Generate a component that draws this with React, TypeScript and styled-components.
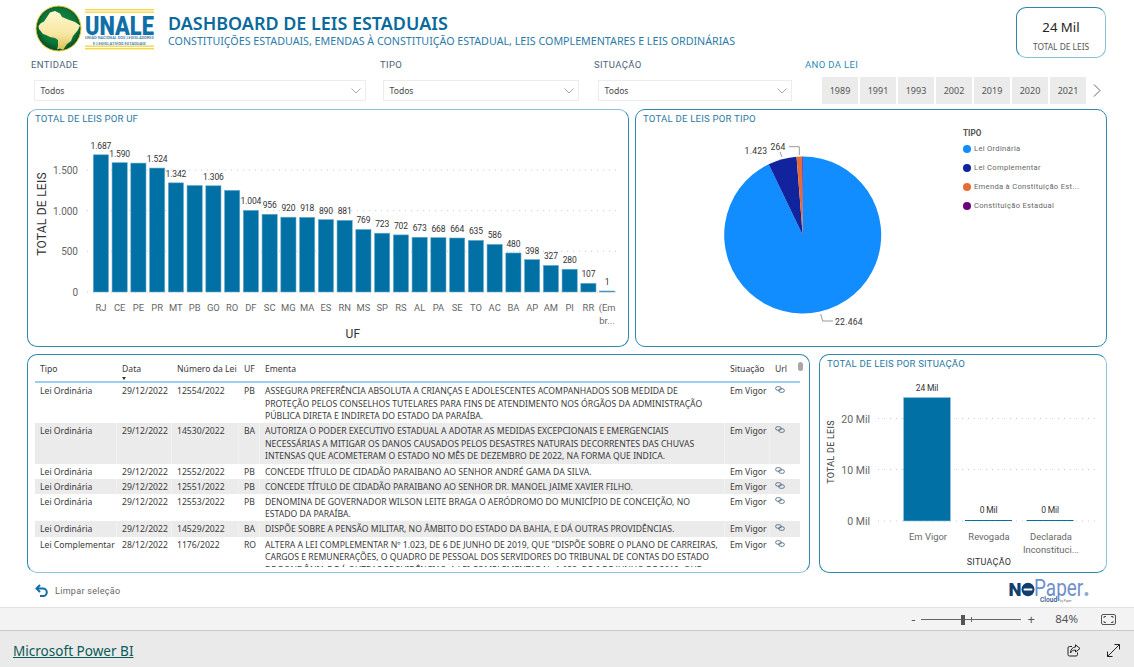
import React from "react";
import styled, { createGlobalStyle } from "styled-components";

const Global = createGlobalStyle`
  html, body { margin: 0; padding: 0; background: #fff; overflow: hidden; }
  #root { width: 1134px; height: 667px; }
  * { box-sizing: border-box; }
`;

const din = `Roboto, "Liberation Sans", sans-serif`;
const segoe = `"Noto Sans", "Open Sans", sans-serif`;

const Page = styled.div`
  width: 1134px; height: 667px; display: flex; flex-direction: column; overflow: hidden; background: #fff;
  font-family: ${segoe};
`;
const Report = styled.main`
  height: 607px; display: flex; flex-direction: column; flex: none;
`;
const Header = styled.header`
  height: 54px; margin-top: 4px; padding: 0 28px 0 35px; display: flex; align-items: flex-start; flex: none;
`;
const TitleBlock = styled.div`
  margin-left: 12px; padding-top: 8px; display: flex; flex-direction: column;
`;
const Title = styled.h1`
  margin: 0; font: 600 17.95px/20px ${segoe}; color: #0a6a9c; white-space: nowrap; padding-top: 1px;
`;
const Subtitle = styled.div`
  font: 400 10.69px/15px ${segoe}; color: #2b7ca8; white-space: nowrap; margin-top: 1px;
`;
const Kpi = styled.div`
  margin-left: auto; margin-top: 3px; width: 90px; height: 51px; border: 1px solid #2f86ad; border-bottom-color: #86bfd8; border-right-color: #86bfd8;
  border-radius: 10px; display: flex; flex-direction: column; align-items: center; padding-top: 11px;
`;
const KpiValue = styled.div` font: 400 13.2px/17px ${segoe}; color: #252423; `;
const KpiLabel = styled.div` font: 400 8.4px/12px ${segoe}; color: #555; margin-top: 5px; white-space: nowrap; `;

const Filters = styled.section`
  height: 51px; flex: none; padding-left: 31px; display: grid; grid-template-columns: 349px 214px 211px 1fr;
`;
const FilterCol = styled.div` display: flex; flex-direction: column; `;
const FilterLabel = styled.div<{ $accent?: boolean }>`
  font: 400 9.5px/12px ${din}; letter-spacing: 0.35px; color: ${p => (p.$accent ? "#2f8ab5" : "#4a6478")};
  margin-top: 1px; height: 16px;
`;
const Select = styled.div<{ $w: number }>`
  width: ${p => p.$w}px; height: 21px; margin-left: ${p => (p.$w > 195 ? 3 : 4)}px; margin-top: 5px; border: 1px solid #ececec;
  display: flex; align-items: center; justify-content: space-between; padding: 0 0 0 5.5px;
  font: 400 8.6px/12px ${segoe}; color: #4a4a4a;
`;
const Chevron = styled.svg` width: 10px; height: 6px; margin-right: 4px; flex: none; `;
const Tiles = styled.div`
  display: flex; gap: 2px; align-items: center; margin-left: 17px; margin-top: 2px;
`;
const Tile = styled.div`
  width: 36px; height: 27px; background: #ebebeb; display: flex; align-items: center; justify-content: center;
  font: 400 9px/12px ${segoe}; color: #555;
`;
const TileNext = styled.svg` width: 8px; height: 13px; margin-left: 5px; `;

const ChartsRow = styled.section`
  height: 238px; flex: none; margin-left: 27px; display: grid; grid-template-columns: 602px 472px; gap: 6px;
`;
const BottomRow = styled.section`
  height: 219px; flex: none; margin: 7px 0 0 27px; display: grid; grid-template-columns: 783px 288px; gap: 9px;
`;
const softColor = "#8cc3dc";
const Card = styled.article<{ $soft?: "top" | "bottom" | "right" }>`
  position: relative; border: 1px solid #2f88b0; border-radius: 10px; overflow: hidden; background: #fff;
  ${p => (p.$soft ? `border-${p.$soft}-color: ${softColor};` : "")}
`;
const CardTitle = styled.h2`
  margin: 0; height: 18px; padding: 3px 0 0 7px; font: 400 9.6px/12px ${din}; letter-spacing: 0.2px; color: #2a7aa3; white-space: nowrap;
`;
const ChartSvg = styled.svg` display: block; `;
const Tick = styled.text<{ $s?: number }>`
  font: 400 ${p => p.$s ?? 10}px ${din}; fill: #666;
`;
const DataLabel = styled.text<{ $s?: number }>`
  font: 400 ${p => p.$s ?? 8.5}px ${din}; fill: #333; letter-spacing: ${p => (p.$s ? 0.25 : -0.15)}px;
`;
const AxisTitle = styled.text<{ $s?: number }>`
  font: 400 ${p => p.$s ?? 12}px ${din}; fill: #333; letter-spacing: 0.25px;
`;
const PieBody = styled.div` display: flex; `;
const Legend = styled.div` padding-left: 7px; display: flex; flex-direction: column; `;
const LegendTitle = styled.div` font: 700 8.2px/11px ${din}; color: #555; height: 11px; `;
const LegendItem = styled.div`
  height: 19px; display: flex; align-items: center; gap: 3px; font: 400 7.6px/12px ${din}; letter-spacing: 0.3px; color: #666; white-space: nowrap;
`;
const Dot = styled.span<{ $c: string }>`
  width: 8px; height: 8px; border-radius: 50%; background: ${p => p.$c}; flex: none;
`;

const TableWrap = styled.div`
  height: 212px; width: 765px; overflow: hidden; margin-left: 7px;
`;
const cols = "82px 55px 67px 21px 465px 45px 22px";
const HeadRow = styled.div`
  display: grid; grid-template-columns: ${cols}; height: 28px; border-bottom: 2px solid #9dcdf0;
`;
const HeadCell = styled.div`
  position: relative; padding: 8px 0 0 5px; font: 400 8.65px/12px ${segoe}; color: #3a3a3a; white-space: nowrap;
`;
const SortCaret = styled.span`
  position: absolute; left: 5px; top: 22px; width: 0; height: 0;
  border-left: 2.5px solid transparent; border-right: 2.5px solid transparent; border-top: 3px solid #333;
`;
const Row = styled.div<{ $alt?: boolean }>`
  display: grid; grid-template-columns: ${cols}; background: ${p => (p.$alt ? "#ebebeb" : "#fff")};
`;
const Cell = styled.div`
  padding: 2px 0 0.5px 5px; font: 400 8.65px/12.6px ${segoe}; color: #3a3a3a; white-space: nowrap;
  border-right: 1px solid rgba(255,255,255,.35);
  &:last-child { border-right: 0; }
`;
const Scroll = styled.div`
  position: absolute; left: 770px; top: 7px; width: 5px; height: 9px; border-radius: 3px; background: #a8a8a8;
`;
const LinkIcon = styled.svg` width: 10px; height: 7px; display: block; margin-top: 1px; `;

const ActionRow = styled.div`
  flex: 1; display: flex; align-items: center; padding: 1px 44px 0 35px; justify-content: space-between;
`;
const Clear = styled.div`
  display: flex; align-items: center; gap: 7px; font: 400 9px/12px ${din}; letter-spacing: 0.3px; color: #666;
`;

const ZoomBar = styled.div`
  height: 24px; flex: none; background: #f3f3f3; border-top: 1px solid #e2e2e2; border-bottom: 1px solid #c9c9c9;
  display: flex; align-items: center; justify-content: flex-end; padding-right: 18px;
`;
const ZoomSign = styled.span<{ $w: number }>`
  font: 400 13px/14px ${segoe}; color: #555; width: ${p => p.$w}px; text-align: center;
`;
const Slider = styled.div`
  position: relative; width: 100px; height: 1px; background: #666; margin: 0 4px;
`;
const Thumb = styled.span`
  position: absolute; left: 40px; top: -4px; width: 4px; height: 10px; background: #555;
`;
const Notch = styled.span`
  position: absolute; left: 50px; top: -2px; width: 1px; height: 5px; background: #666;
`;
const ZoomPct = styled.span`
  font: 400 11.5px/14px ${segoe}; color: #555; margin: 0 23px 0 18px;
`;
const Footer = styled.footer`
  flex: 1; background: #eaeaea; display: flex; align-items: center; padding: 0 14px 0 13px;
`;
const FooterLink = styled.a`
  font: 400 13.55px/18px ${segoe}; color: #0b5b57; text-decoration: underline; margin-top: 4px;
`;
const FooterIcons = styled.div`
  margin-left: auto; display: flex; gap: 26px; align-items: center; margin-top: 3px;
`;

const bars: [string, number, boolean][] = [
  ["RJ",1687,true],["CE",1590,true],["PE",1585,false],["PR",1524,true],["MT",1342,true],["PB",1310,false],["GO",1306,true],["RO",1250,false],["DF",1004,true],["SC",956,true],["MG",920,true],["MA",918,true],["ES",890,true],["RN",881,true],["MS",769,true],["SP",723,true],["RS",702,true],["AL",673,true],["PA",668,true],["SE",664,true],["TO",635,true],["AC",586,true],["BA",480,true],["AP",398,true],["AM",327,true],["PI",280,true],["RR",107,true],["(Em",1,true],
];
const fmt = (n: number) => n.toString().replace(/\B(?=(\d{3})+$)/g, ".");

function UfChart() {
  const base = 292, k = 122 / 1500;
  return (
    <ChartSvg width={600} height={218} viewBox="28 128 600 218">
      {[0, 500, 1000, 1500].map(t => {
        const y = base - t * k;
        return (
          <g key={t}>
            <line x1={87} x2={618} y1={y} y2={y} stroke="#ccc" strokeWidth={1} strokeDasharray="1 5" />
            <Tick x={78} y={y + 4} textAnchor="end">{fmt(t)}</Tick>
          </g>
        );
      })}
      {bars.map(([n, v, lab], i) => {
        const x = 93.3 + i * 18.75, h = Math.max(v * k, 1);
        return (
          <g key={n}>
            <rect x={x} y={base - h} width={15.2} height={h} fill="#0070a5" stroke="#6fadcb" strokeWidth={0.6} />
            {lab && <DataLabel x={x + 7.6} y={base - h - 6} textAnchor="middle">{fmt(v)}</DataLabel>}
            <Tick $s={9.4} x={x + 7.6} y={311} textAnchor="middle">{n}</Tick>
          </g>
        );
      })}
      <Tick $s={9.4} x={607} y={324} textAnchor="middle">br...</Tick>
      <AxisTitle x={0} y={0} transform="translate(46,214) rotate(-90)" textAnchor="middle">TOTAL DE LEIS</AxisTitle>
      <AxisTitle x={353} y={338} textAnchor="middle">UF</AxisTitle>
    </ChartSvg>
  );
}

const pieData = [
  { n: "Lei Ordinária", v: 22464, c: "#118DFF" },
  { n: "Lei Complementar", v: 1423, c: "#12239E" },
  { n: "Emenda à Constituição Est...", v: 264, c: "#E66C37" },
  { n: "Constituição Estadual", v: 40, c: "#6B007B" },
];
function PieChart() {
  const cx = 802.7, cy = 235, r = 78.5;
  const total = pieData.reduce((s, d) => s + d.v, 0);
  let a = 0;
  const pt = (ang: number) => [cx + r * Math.sin(ang), cy - r * Math.cos(ang)];
  return (
    <ChartSvg width={320} height={218} viewBox="636 128 320 218">
      {pieData.map(d => {
        const a0 = a; a += (d.v / total) * Math.PI * 2;
        const [x0, y0] = pt(a0), [x1, y1] = pt(a);
        const large = a - a0 > Math.PI ? 1 : 0;
        return <path key={d.n} d={`M${cx} ${cy}L${x0} ${y0}A${r} ${r} 0 ${large} 1 ${x1} ${y1}Z`} fill={d.c} />;
      })}
      <path d="M820.7 314L822.7 321H833" fill="none" stroke="#999" />
      <path d="M789 146.7H799.3V155" fill="none" stroke="#999" />
      <path d="M780 152L782 157" fill="none" stroke="#999" />
      <DataLabel $s={8.6} x={849} y={325} textAnchor="middle">22.464</DataLabel>
      <DataLabel $s={8.6} x={756} y={154} textAnchor="middle">1.423</DataLabel>
      <DataLabel $s={8.6} x={778} y={150} textAnchor="middle">264</DataLabel>
    </ChartSvg>
  );
}

function SituacaoChart() {
  return (
    <ChartSvg width={286} height={199} viewBox="820 373 286 199">
      {[[0, 521], [10, 469.5], [20, 418.5]].map(([t, y]) => (
        <g key={t}>
          <line x1={878} x2={1098} y1={y} y2={y} stroke="#ccc" strokeDasharray="1 5" />
          <Tick $s={10.5} x={870} y={y + 4} textAnchor="end">{t} Mil</Tick>
        </g>
      ))}
      <rect x={903.5} y={397.5} width={47} height={123.5} fill="#0070a5" stroke="#9cc8dd" strokeWidth={0.6} />
      <rect x={965} y={520} width={47} height={1} fill="#0070a5" />
      <rect x={1026.5} y={520} width={47} height={1} fill="#0070a5" />
      <DataLabel x={927} y={391} textAnchor="middle">24 Mil</DataLabel>
      <DataLabel x={988.5} y={513} textAnchor="middle">0 Mil</DataLabel>
      <DataLabel x={1050} y={513} textAnchor="middle">0 Mil</DataLabel>
      <Tick $s={9.4} x={928} y={540} textAnchor="middle">Em Vigor</Tick>
      <Tick $s={9.4} x={989} y={540} textAnchor="middle">Revogada</Tick>
      <Tick $s={9.4} x={1051} y={540} textAnchor="middle">Declarada</Tick>
      <Tick $s={9.4} x={1051} y={553} textAnchor="middle">Inconstituci...</Tick>
      <AxisTitle $s={9} x={989} y={565} textAnchor="middle">SITUAÇÃO</AxisTitle>
      <AxisTitle $s={9} x={0} y={0} transform="translate(834,452) rotate(-90)" textAnchor="middle">TOTAL DE LEIS</AxisTitle>
    </ChartSvg>
  );
}

const rows: { t: string; d: string; n: string; u: string; e: string[] }[] = [
  { t: "Lei Ordinária", d: "29/12/2022", n: "12554/2022", u: "PB", e: ["ASSEGURA PREFERÊNCIA ABSOLUTA A CRIANÇAS E ADOLESCENTES ACOMPANHADOS SOB MEDIDA DE", "PROTEÇÃO PELOS CONSELHOS TUTELARES PARA FINS DE ATENDIMENTO NOS ÓRGÃOS DA ADMINISTRAÇÃO", "PÚBLICA DIRETA E INDIRETA DO ESTADO DA PARAÍBA."] },
  { t: "Lei Ordinária", d: "29/12/2022", n: "14530/2022", u: "BA", e: ["AUTORIZA O PODER EXECUTIVO ESTADUAL A ADOTAR AS MEDIDAS EXCEPCIONAIS E EMERGENCIAIS", "NECESSÁRIAS A MITIGAR OS DANOS CAUSADOS PELOS DESASTRES NATURAIS DECORRENTES DAS CHUVAS", "INTENSAS QUE ACOMETERAM O ESTADO NO MÊS DE DEZEMBRO DE 2022, NA FORMA QUE INDICA."] },
  { t: "Lei Ordinária", d: "29/12/2022", n: "12552/2022", u: "PB", e: ["CONCEDE TÍTULO DE CIDADÃO PARAIBANO AO SENHOR ANDRÉ GAMA DA SILVA."] },
  { t: "Lei Ordinária", d: "29/12/2022", n: "12551/2022", u: "PB", e: ["CONCEDE TÍTULO DE CIDADÃO PARAIBANO AO SENHOR DR. MANOEL JAIME XAVIER FILHO."] },
  { t: "Lei Ordinária", d: "29/12/2022", n: "12553/2022", u: "PB", e: ["DENOMINA DE GOVERNADOR WILSON LEITE BRAGA O AERÓDROMO DO MUNICÍPIO DE CONCEIÇÃO, NO", "ESTADO DA PARAÍBA."] },
  { t: "Lei Ordinária", d: "29/12/2022", n: "14529/2022", u: "BA", e: ["DISPÕE SOBRE A PENSÃO MILITAR, NO ÂMBITO DO ESTADO DA BAHIA, E DÁ OUTRAS PROVIDÊNCIAS."] },
  { t: "Lei Complementar", d: "28/12/2022", n: "1176/2022", u: "RO", e: ["ALTERA A LEI COMPLEMENTAR Nº 1.023, DE 6 DE JUNHO DE 2019, QUE \"DISPÕE SOBRE O PLANO DE CARREIRAS,", "CARGOS E REMUNERAÇÕES, O QUADRO DE PESSOAL DOS SERVIDORES DO TRIBUNAL DE CONTAS DO ESTADO", "DE RONDÔNIA E DÁ OUTRAS PROVIDÊNCIAS. A LEI COMPLEMENTAR Nº 1.023, DE 6 DE JUNHO DE 2019, QUE"] },
];

const Link = () => (
  <LinkIcon viewBox="0 0 11 8">
    <rect x="0.5" y="0.8" width="6.4" height="4" rx="2" fill="none" stroke="#3f5a74" strokeWidth="0.9" />
    <rect x="4.1" y="3.2" width="6.4" height="4" rx="2" fill="none" stroke="#3f5a74" strokeWidth="0.9" />
  </LinkIcon>
);

const Logo = () => (
  <svg width={121} height={50} viewBox="35 4 121 50">
    <defs>
      <radialGradient id="gl" cx="50%" cy="45%" r="55%">
        <stop offset="0%" stopColor="#1f8f4c" />
        <stop offset="72%" stopColor="#0b7438" />
        <stop offset="100%" stopColor="#034a26" />
      </radialGradient>
      <linearGradient id="mp" x1="0" y1="0" x2="0" y2="1">
        <stop offset="0%" stopColor="#fff7cf" />
        <stop offset="60%" stopColor="#f6e7a0" />
        <stop offset="100%" stopColor="#d9bf55" />
      </linearGradient>
    </defs>
    <circle cx="58.5" cy="28.5" r="22.5" fill="url(#gl)" stroke="#e8c92c" strokeWidth="1" />
    <path d="M50 12.5L55 11L60 13.5L62 17L68 19.5L75 22L80 25.5L78 30L73 36L71 41L67 44L63 50L60 48.5L57 49.5L58 46L58 40L55 38L50 37L46 35L43 34L39 29L38.5 26L41 23L44 21.5L47 17Z" fill="url(#mp)" />
    <g fill="#f5d84a">
      <rect x="85" y="9" width="69" height="1.4" />
      <rect x="85" y="11.5" width="69" height="1.4" />
      <rect x="85" y="45.5" width="69" height="1.4" />
      <rect x="85" y="48" width="69" height="1.4" />
    </g>
    <text transform="translate(85,34.5) scale(0.81,1)" textLength={85} lengthAdjust="spacingAndGlyphs" fontFamily="Roboto, sans-serif" fontWeight="900" fontSize="26" fill="#0f6fa6">UNALE</text>
    <text transform="translate(85,39.4) scale(0.8,1)" textLength={86} lengthAdjust="spacingAndGlyphs" fontFamily="Roboto, sans-serif" fontWeight="500" fontSize="4.2" fill="#2c6f99">UNIÃO NACIONAL DOS LEGISLADORES</text>
    <text transform="translate(93,44.6) scale(0.8,1)" textLength={66} lengthAdjust="spacingAndGlyphs" fontFamily="Roboto, sans-serif" fontWeight="500" fontSize="4.2" fill="#2c6f99">E LEGISLATIVOS ESTADUAIS</text>
  </svg>
);

const NoPaper = () => (
  <svg width={82} height={24} viewBox="1009 580 82 24">
    <text x="1009.5" y="597" textLength={13} lengthAdjust="spacingAndGlyphs" fontFamily="Roboto, sans-serif" fontWeight="900" fontSize="18" fill="#123f70">N</text>
    <ellipse cx="1029" cy="590.5" rx="6.5" ry="6.7" fill="#123f70" />
    <rect x="1024.5" y="589.5" width="9" height="2" rx="1" fill="#fff" />
    <text transform="translate(1035,597) scale(0.82,1)" textLength={60} lengthAdjust="spacingAndGlyphs" fontFamily="Roboto, sans-serif" fontWeight="400" fontSize="23.5" fill="#6f90cb">Paper</text>
    <circle cx="1087.5" cy="595" r="2" fill="#8fa9d6" />
    <text x="1041" y="603" fontFamily="Roboto, sans-serif" fontWeight="500" fontSize="6.6" fill="#1d4f86">Cloud</text>
    <text x="1061" y="603" fontFamily="Roboto, sans-serif" fontSize="3" fill="#777">by Paper</text>
  </svg>
);

export default function App() {
  return (
    <Page>
      <Global />
      <Report>
        <Header>
          <Logo />
          <TitleBlock>
            <Title>DASHBOARD DE LEIS ESTADUAIS</Title>
            <Subtitle>CONSTITUIÇÕES ESTADUAIS, EMENDAS À CONSTITUIÇÃO ESTADUAL, LEIS COMPLEMENTARES E LEIS ORDINÁRIAS</Subtitle>
          </TitleBlock>
          <Kpi>
            <KpiValue>24 Mil</KpiValue>
            <KpiLabel>TOTAL DE LEIS</KpiLabel>
          </Kpi>
        </Header>
        <Filters>
          {([["ENTIDADE", 332], ["TIPO", 196], ["SITUAÇÃO", 194]] as [string, number][]).map(([l, w]) => (
            <FilterCol key={l}>
              <FilterLabel>{l}</FilterLabel>
              <Select $w={w}>
                Todos
                <Chevron viewBox="0 0 10 6"><path d="M0.5 0.5L5 5L9.5 0.5" fill="none" stroke="#aaa" /></Chevron>
              </Select>
            </FilterCol>
          ))}
          <FilterCol>
            <FilterLabel $accent>ANO DA LEI</FilterLabel>
            <Tiles>
              {["1989", "1991", "1993", "2002", "2019", "2020", "2021"].map(y => <Tile key={y}>{y}</Tile>)}
              <TileNext viewBox="0 0 8 13"><path d="M1 0.5L7 6.5L1 12.5" fill="none" stroke="#666" /></TileNext>
            </Tiles>
          </FilterCol>
        </Filters>
        <ChartsRow>
          <Card $soft="top">
            <CardTitle>TOTAL DE LEIS POR UF</CardTitle>
            <UfChart />
          </Card>
          <Card>
            <CardTitle>TOTAL DE LEIS POR TIPO</CardTitle>
            <PieBody>
              <PieChart />
              <Legend>
                <LegendTitle>TIPO</LegendTitle>
                {pieData.map(d => (
                  <LegendItem key={d.n}><Dot $c={d.c} />{d.n}</LegendItem>
                ))}
              </Legend>
            </PieBody>
          </Card>
        </ChartsRow>
        <BottomRow>
          <Card $soft="bottom">
            <TableWrap>
              <HeadRow>
                <HeadCell>Tipo</HeadCell>
                <HeadCell>Data<SortCaret /></HeadCell>
                <HeadCell>Número da Lei</HeadCell>
                <HeadCell>UF</HeadCell>
                <HeadCell>Ementa</HeadCell>
                <HeadCell>Situação</HeadCell>
                <HeadCell>Url</HeadCell>
              </HeadRow>
              {rows.map((r, i) => (
                <Row key={r.n} $alt={i % 2 === 1}>
                  <Cell>{r.t}</Cell>
                  <Cell>{r.d}</Cell>
                  <Cell>{r.n}</Cell>
                  <Cell>{r.u}</Cell>
                  <Cell>{r.e.map(l => <div key={l}>{l}</div>)}</Cell>
                  <Cell>Em Vigor</Cell>
                  <Cell><Link /></Cell>
                </Row>
              ))}
            </TableWrap>
            <Scroll />
          </Card>
          <Card $soft="right">
            <CardTitle>TOTAL DE LEIS POR SITUAÇÃO</CardTitle>
            <SituacaoChart />
          </Card>
        </BottomRow>
        <ActionRow>
          <Clear>
            <svg width={13} height={14} viewBox="0 0 13 14">
              <path d="M5 1L1.5 4.5L5 8" fill="none" stroke="#0f6fa6" strokeWidth="2" />
              <path d="M2 4.5H8a3.8 3.8 0 0 1 0 7.6H5" fill="none" stroke="#0f6fa6" strokeWidth="2" />
            </svg>
            Limpar seleção
          </Clear>
          <NoPaper />
        </ActionRow>
      </Report>
      <ZoomBar>
        <ZoomSign $w={8}>-</ZoomSign>
        <Slider><Thumb /><Notch /></Slider>
        <ZoomSign $w={12}>+</ZoomSign>
        <ZoomPct>84%</ZoomPct>
        <svg width={15} height={11} viewBox="0 0 15 11">
          <rect x="0.5" y="0.5" width="14" height="10" rx="1.5" fill="none" stroke="#555" />
          <path d="M3 4V2.5H5M10 2.5H12V4M12 7V8.5H10M5 8.5H3V7" fill="none" stroke="#555" />
        </svg>
      </ZoomBar>
      <Footer>
        <FooterLink>Microsoft Power BI</FooterLink>
        <FooterIcons>
          <svg width={14} height={13} viewBox="0 0 14 13">
            <path d="M5 2.5H2.5A1.5 1.5 0 0 0 1 4V10.5A1.5 1.5 0 0 0 2.5 12H9A1.5 1.5 0 0 0 10.5 10.5V8.5" fill="none" stroke="#222" />
            <path d="M8.5 0.8L13 4.5L8.5 8V6C6 6 4.5 7 3.5 9C3.5 5.5 5.5 3.2 8.5 3Z" fill="none" stroke="#222" />
          </svg>
          <svg width={13} height={13} viewBox="0 0 13 13">
            <path d="M7.5 0.5H12.5V5.5M12.5 0.5L0.5 12.5M0.5 7.5V12.5H5.5" fill="none" stroke="#222" />
          </svg>
        </FooterIcons>
      </Footer>
    </Page>
  );
}
